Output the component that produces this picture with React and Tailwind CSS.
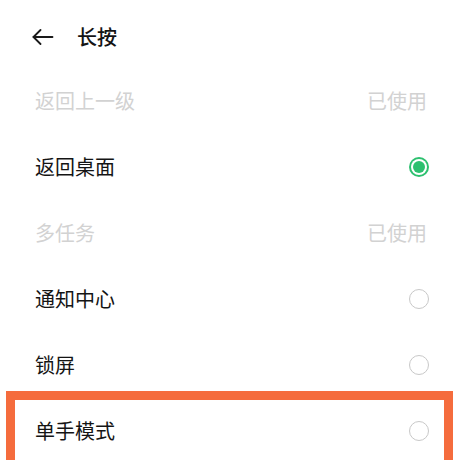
import React from "react";

const rows = [
  { label: "返回上一级", state: "used" },
  { label: "返回桌面", state: "checked" },
  { label: "多任务", state: "used" },
  { label: "通知中心", state: "off" },
  { label: "锁屏", state: "off" },
  { label: "单手模式", state: "off", highlight: true },
];

function Radio({ checked }) {
  if (checked) {
    return (
      <div className="w-[20px] h-[20px] rounded-full bg-[#2dc06f] flex items-center justify-center">
        <div className="w-[16px] h-[16px] rounded-full bg-white flex items-center justify-center">
          <div className="w-[12px] h-[12px] rounded-full bg-[#2dc06f]" />
        </div>
      </div>
    );
  }
  return <div className="w-[20px] h-[20px] rounded-full border-[1.5px] border-[#c8c8c8]" />;
}

export default function App() {
  return (
    <div
      className="w-[472px] h-[460px] bg-white overflow-hidden relative"
      style={{ fontFamily: '"Noto Sans CJK SC", "Noto Sans", sans-serif' }}
    >
      <div className="h-[68px] pt-[6px] flex items-center pl-[32px]">
        <svg width="22" height="16" viewBox="0 0 22 16" fill="none" stroke="#1a1a1a" strokeWidth="1.8" strokeLinecap="round" strokeLinejoin="round">
          <path d="M1.5 8 H20.5" />
          <path d="M8.5 1 L1.5 8 L8.5 15" />
        </svg>
        <span className="ml-[23px] text-[20px] font-medium text-[#141414] leading-none">长按</span>
      </div>
      {rows.map((r) => (
        <div key={r.label} className="relative h-[66px] flex items-center justify-between pl-[35px] pr-[43px]">
          {r.highlight && (
            <div className="absolute left-[6px] right-[19px] top-[-7px] h-[80px] border-[9px] border-[#f56c3d] pointer-events-none" />
          )}
          <span
            className={
              "text-[20px] leading-none " +
              (r.state === "used" ? "text-[#d2d2d2]" : "text-[#141414]")
            }
          >
            {r.label}
          </span>
          {r.state === "used" ? (
            <span className="text-[20px] leading-none text-[#d2d2d2] mr-[2px]">已使用</span>
          ) : (
            <Radio checked={r.state === "checked"} />
          )}
        </div>
      ))}
    </div>
  );
}
